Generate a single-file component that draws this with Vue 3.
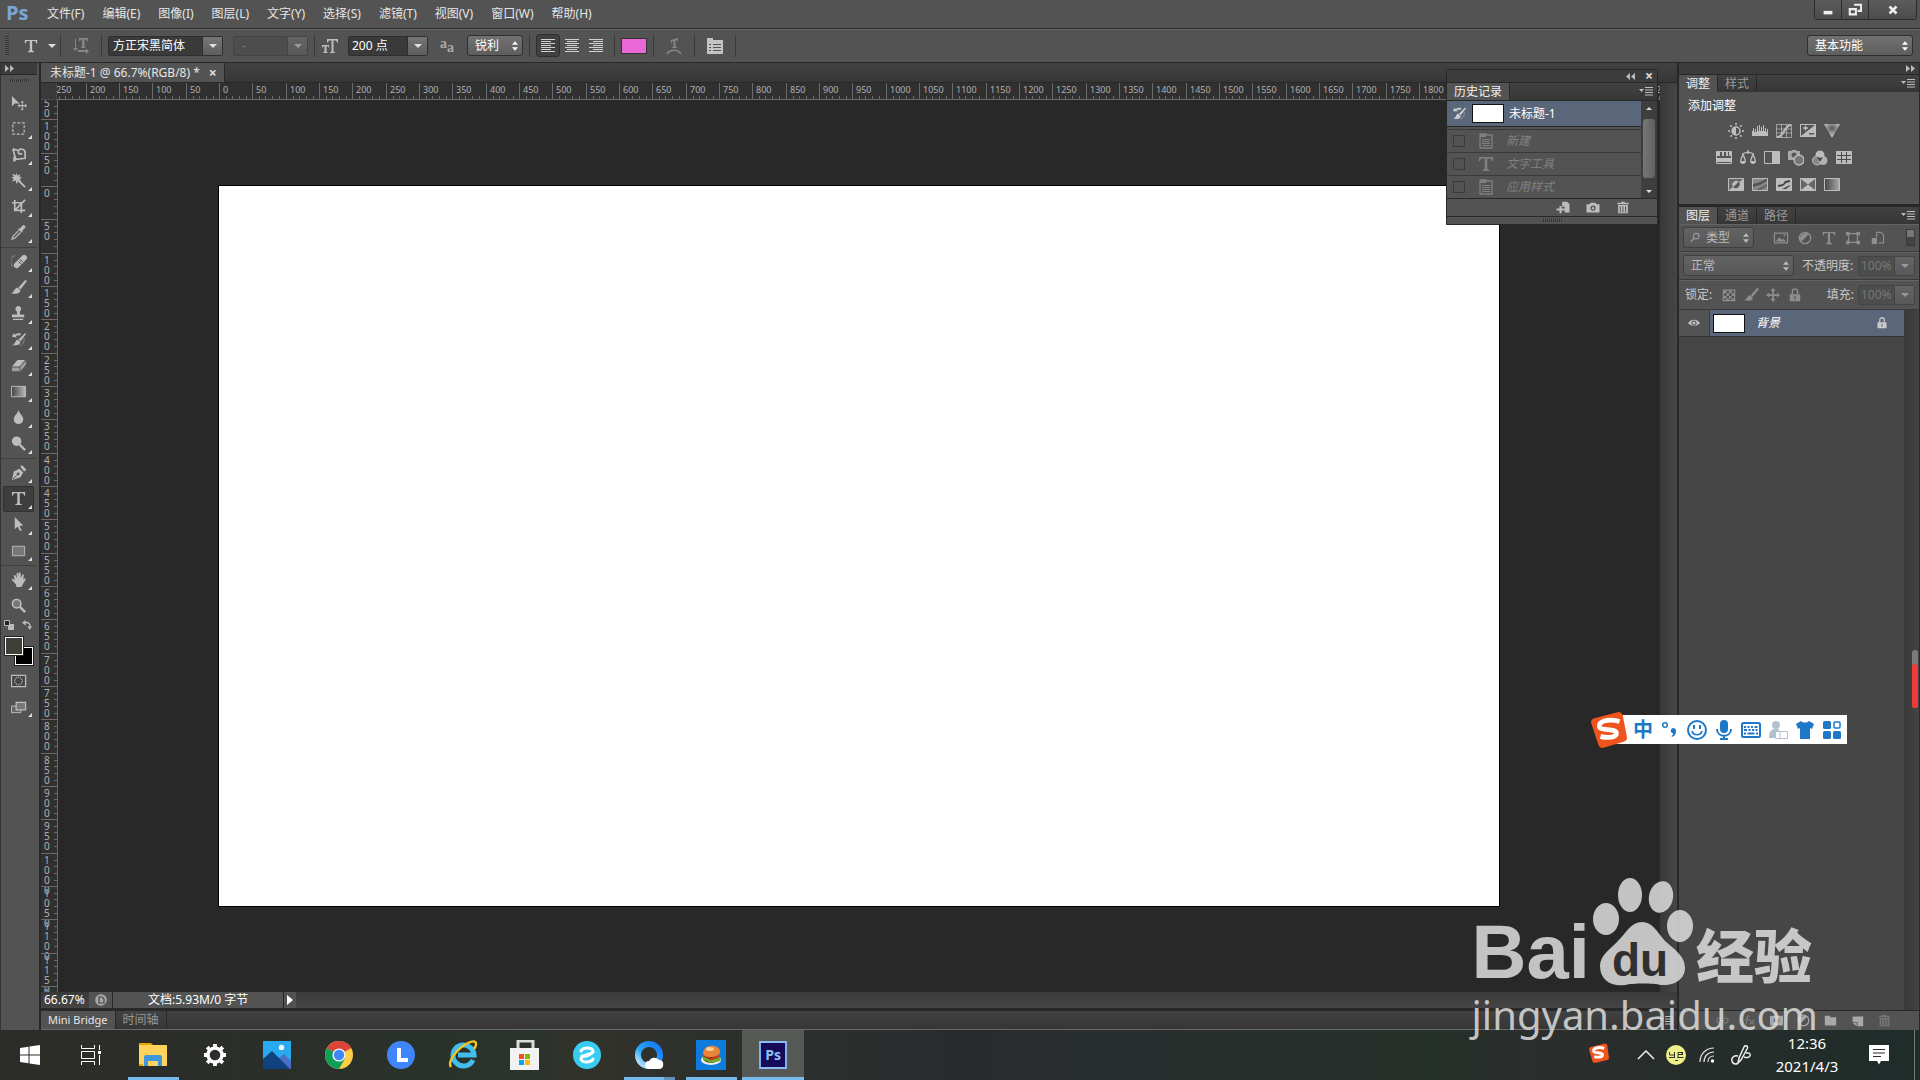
<script setup>
import { ref } from 'vue'

const menus = ['文件(F)', '编辑(E)', '图像(I)', '图层(L)', '文字(Y)', '选择(S)', '滤镜(T)', '视图(V)', '窗口(W)', '帮助(H)']

// 工具箱分组
const toolGroups = [
  ['move', 'marquee', 'lasso', 'wand', 'crop', 'dropper'],
  ['heal', 'brush', 'stamp', 'history', 'eraser', 'gradient', 'blur', 'dodge'],
  ['pen', 'type', 'path', 'rect'],
  ['hand', 'zoom']
]
const activeTool = ref('type')

const hMarks = Array.from({ length: 49 }, (_, i) => Math.abs(i - 5) * 50)
const vMarks = Array.from({ length: 28 }, (_, i) => Math.abs(i - 3) * 50)

const fontName = ref('方正宋黑简体')
const fontStyle = ref('-')
const fontSize = ref('200 点')
const align = ref('left')
const opacity = ref('100%')
const fillValue = ref('100%')

const adjustRows = [
  ['sun', 'levels', 'curves', 'exposure', 'vibrance'],
  ['hue', 'balance', 'bw', 'photo', 'mixer', 'lookup'],
  ['invert', 'poster', 'threshold', 'selective', 'gradmap']
]

const historyItems = [
  { icon: 'doc', name: '新建' },
  { icon: 'type', name: '文字工具' },
  { icon: 'doc', name: '应用样式' }
]

const filterIcons = ['image', 'halfcircle', 'type', 'shape', 'smart']
const lockIcons = ['checker', 'brush', 'cross', 'lock']
const layerActions = ['link', 'fx', 'mask', 'halfcircle', 'folder', 'newlayer', 'trash']

const apps = [
  { icon: 'explorer', name: '文件资源管理器', state: 'open' },
  { icon: 'settings', name: '设置' },
  { icon: 'photos', name: '照片' },
  { icon: 'chrome', name: 'Chrome' },
  { icon: 'lapp', name: 'L' },
  { icon: 'ie', name: 'Internet Explorer' },
  { icon: 'store', name: '应用商店' },
  { icon: 'eapp', name: '2345' },
  { icon: 'qq', name: 'QQ浏览器', state: 'open multi' },
  { icon: 'burger', name: '汉堡', state: 'open' },
  { icon: 'ps', name: 'Photoshop', state: 'open current' }
]

const icons = {
  move: '<path d="M1 1v11l3-3h5z"/><path d="M12 6l2 2h-1.500v2.500H15V9l2 2.500-2 2V12h-2.500v2.500H14l-2 2-2-2h1.500V12H9v1.500l-2-2L9 9v1.500h2.500V8H10z"/>',
  marquee: '<path d="M2 2h12v12H2z" fill="none" stroke="currentColor" stroke-width="1.300" stroke-dasharray="3 1.800"/>',
  lasso: '<path d="M2 2l3 11 10-1V6c0-4-6-5-7-2s1 4 4 3M2 2l6 2M3 15l2-4" fill="none" stroke="currentColor" stroke-width="1.800"/><path d="M2 10l5 3-4 3z"/>',
  wand: '<path d="M6 0l1 3 3-2-1 3 3 1-3 1 2 3-3-1-2 4-1-4-4 1 2-3-3-1 3-1-2-3 4 1z"/><path d="M8 8l7 7" stroke="currentColor" stroke-width="2"/>',
  crop: '<path d="M4 1v11h11M1 4h10v11M5 11l10-10" fill="none" stroke="currentColor" stroke-width="1.800"/>',
  dropper: '<path d="M9 4l1-1 3-3c2 0 3 2 2 3l-3 3 0 2-1 0-4-4z"/><path d="M8 6L2 12l-1 3 3-1 6-6" fill="none" stroke="currentColor" stroke-width="1.300"/>',
  heal: '<path d="M6 12L14 4" stroke="currentColor" stroke-width="6" stroke-linecap="round"/><path d="M7 7l5 5M9 5l4 4" stroke="#666" stroke-width="1"/><path d="M4 2C1 2 0 4 0 7s0 5 2 7" fill="none" stroke="currentColor" stroke-dasharray="1 1"/><path d="M10 7h1v1h-1zM9 9h1v1H9z" fill="#444"/>',
  brush: '<path d="M15 0l2 1-7 9-2-2z"/><path d="M7 8l3 3c0 4-5 4-10 3 4-1 3-5 7-6z"/>',
  stamp: '<path d="M8 0a3 3 0 0 1 2 5c-1 1-.5 2-.5 4H14v3H1V9h5.500c0-2 0-3-1-4A3 3 0 0 1 8 0zM2 13.500h11V15H2z"/>',
  history: '<path d="M15 1l1 1-6 8-2-2zM7 8l3 3c-1 4-5 3-9 3 4-1 3-5 6-6z"/><path d="M1 5l2-4 1 2c3-2 5-2 7-1L9 4C7 3 6 4 5 5l2 1z"/><path d="M14 7c0 4-1 6-4 7" fill="none" stroke="currentColor" stroke-dasharray="1 1"/>',
  eraser: '<path d="M7 2h8l-6 7H1z"/><path d="M1 10h8v4H1zM10 9l6-6v4l-6 7z" opacity=".7"/>',
  gradient: '<defs><linearGradient id="tg"><stop stop-color="#444"/><stop offset="1" stop-color="#bbb"/></linearGradient></defs><path d="M.5 2.500h15v11H.5z" fill="url(#tg)" stroke="currentColor"/>',
  blur: '<path d="M8 0c1 4 5 6 5 10a5 5 0 0 1-10 0C3 6 7 4 8 0z"/>',
  dodge: '<circle cx="6" cy="5.500" r="5"/><path d="M9 9l6 6" stroke="currentColor" stroke-width="2.500"/>',
  pen: '<path fill-rule="evenodd" d="M9 4l4 4-3 5-9 3 2-9zM7.500 8A1.500 1.500 0 1 0 7.600 8zM10 2l1.500-2 5 5L14 7z"/><path d="M2 15l5-5" stroke="#535353"/>',
  type: '<path d="M1 1h14v4h-1c-.4-2-1-2.600-3-2.600H9.300V12c0 1.600.6 1.900 2.200 2v1h-7v-1c1.600-.1 2.200-.4 2.200-2V2.400H5C3 2.400 2.400 3 2 5H1z"/>',
  path: '<path d="M4 0l9 9-4 .5 2.500 4.500-2 1L7 10l-3 3z"/>',
  rect: '<path d="M1.500 3.500h13v10h-13z" fill="#777" stroke="currentColor"/>',
  hand: '<path d="M4 9L3 4c0-1 1.500-1 2 0l1 3V1.500c0-1 1.800-1 2 0V6l.5-5c.2-1 1.800-1 1.800 0v5.500L12 3c.4-1 1.700-.6 1.600.4L13 8l1.500-1c1-.4 1.700.4 1 1.300L12 14l-1 2H6l-1-3-4-4.500C.5 7.500 1.500 7 2.300 7.500z"/>',
  zoom: '<circle cx="6" cy="6" r="4.500" fill="#777" stroke="currentColor" stroke-width="1.600"/><path d="M9.500 9.500l5.500 5.500" stroke="currentColor" stroke-width="2.600"/>',
  orient: '<path d="M6 0h9v3h-1l-1-1.500h-1.500V9h1v1H8V9h1V1.500H8L7 3H6zM3 1v9H5l-2.500 3L0 10h2V1zM5 12h8v-1.500L16 13l-3 3v-2H5z"/>',
  fontsize: '<path d="M5 1h11v3.500h-1c-.3-1.600-.8-2-2.500-2h-1V13c0 1 .5 1 1.500 1v1H8v-1c1 0 1.500 0 1.500-1V2.500h-1c-1.700 0-2.200.4-2.500 2H5z"/><path d="M0 7h7v2.500h-.8c-.2-1-.5-1.200-1.700-1.200V13c0 .8.300 1 1 1v1h-4v-1c.7 0 1-.2 1-1V8.300C1.300 8.300 1 8.500.8 9.500H0z"/>',
  warp: '<path d="M5 2l7-2v3h-1V2L9.500 2.400V9H11v1H6V9h1.500V3L6 3.500V5H5z"/><path d="M1 16c3-5 11-5 14 0" fill="none" stroke="currentColor" stroke-width="1.700"/>',
  panel: '<path fill-rule="evenodd" d="M0 0h6v2h10v14H0zM2 6v1h2V6zm4 0v1h8V6zM2 9v1h2V9zm4 0v1h8V9zm-4 3v1h2v-1zm4 0v1h8v-1z"/>',
  quick: '<path d="M.5 2.500h15v12H.5z" fill="#444" stroke="currentColor" stroke-width="1.400"/><circle cx="8" cy="8.500" r="4" fill="none" stroke="currentColor" stroke-width="1.400" stroke-dasharray="1 1"/>',
  screen: '<path d="M.5 7.500h10v7H.5z" fill="#666" stroke="currentColor"/><path d="M5.500 3.500h10v8h-10z" fill="#777" stroke="currentColor" stroke-width="1.300"/>',
  sun: '<circle cx="8" cy="8" r="4" fill="none" stroke="currentColor" stroke-width="1.500"/><path d="M8 4a4 4 0 0 0 0 8z"/><path d="M8 0v2M8 14v2M0 8h2M14 8h2M2.300 2.300l1.500 1.500M12.200 12.200l1.500 1.500M2.300 13.700l1.500-1.500M12.200 3.800l1.500-1.500" stroke="currentColor" stroke-width="1.600"/>',
  levels: '<path d="M0 13V8h1V5h1v4h1V6h1v3h1V3h1v5h1V2h1v6h1V4h1v4h1V2h1v6h1V5h1v4h1V6h1v7z"/>',
  curves: '<path d="M.5 1.500h15v13H.5zM5.500 1v14M10.500 1v14M0 6h16M0 10h16" fill="none" stroke="currentColor" opacity=".7"/><path d="M1 14c8 0 6-11 14-12" fill="none" stroke="currentColor" stroke-width="2"/>',
  exposure: '<path fill-rule="evenodd" d="M0 1h16v13H0zM1 2v11L15 2zM9 10v1.500h5V10z"/><path d="M3 5h5M5.500 2.500v5" stroke="currentColor" stroke-width="1.300"/>',
  vibrance: '<defs><radialGradient id="vb" cx=".5" cy=".3" r=".5"><stop stop-color="#555"/><stop offset="1" stop-color="#bbb"/></radialGradient></defs><path d="M0 1h16L8 15z" fill="url(#vb)"/>',
  hue: '<path d="M.5 1.500h15v12H.5z" fill="#555" stroke="currentColor"/><path d="M1 2h3v4H1zM6 2h2v4H6zM10 2h2v4h-2zM13 2h2v4h-2zM1 8h14v4H1z"/>',
  balance: '<path d="M8 0v4M2 4l6-2 6 2M3 4L.5 11M3 4l2.500 7M13 4l-2.500 7M13 4l2.500 7" fill="none" stroke="currentColor" stroke-width="1.300"/><path d="M0 11h6c0 4-6 4-6 0zM10 11h6c0 4-6 4-6 0z"/>',
  bw: '<path d="M.5 1.500h15v12H.5z" fill="none" stroke="currentColor"/><path d="M8 2h7v11H8z"/>',
  photo: '<path d="M0 1h3l1-1h4l1 1h3v9H0z" opacity=".8"/><circle cx="6" cy="5" r="2.500" fill="#555"/><circle cx="11" cy="10" r="5" fill="#777" stroke="currentColor" stroke-width="1.300"/>',
  mixer: '<circle cx="8" cy="5" r="4.500"/><circle cx="5" cy="10.500" r="4.500" fill="#888" stroke="currentColor"/><circle cx="11" cy="10.500" r="4.500" opacity=".9"/><path d="M5 7l3 1 3-1-3 5z" fill="#444"/>',
  lookup: '<path d="M0 1h16v13H0z"/><path d="M5.500 2v11M10.500 2v11M1 5.500h14M1 9.500h14" stroke="#4a4a4a"/>',
  invert: '<path d="M.5 1.500h15v12H.5z" fill="#bbb" stroke="currentColor"/><path d="M1 13V2h14z" fill="#666"/><path d="M5.200 10.300a4 4 0 0 1 5.600-5.600z"/><path d="M5.200 10.300a4 4 0 0 0 5.600-5.600z" fill="#555"/>',
  poster: '<path d="M.5 1.500h15v12H.5z" fill="#888" stroke="currentColor"/><path d="M1 7l7-2 6-3h1v2l-7 4-7 2z" fill="#555"/><path d="M3 13l6-3 6-3v2l-6 4z" fill="#666"/>',
  threshold: '<path d="M.5 1.500h15v12H.5z" fill="currentColor" stroke="currentColor"/><path d="M2 8l5-1 2-3 5-1v2l-4 1-3 3-5 1zM6 12l4-2 4-2v1l-4 3z" fill="#444"/>',
  selective: '<path d="M0 1h16v13H0z"/><path d="M1 2l7 5.500L1 13zM15 2L8 7.500 15 13z" fill="#666"/>',
  gradmap: '<defs><linearGradient id="gm"><stop stop-color="#444"/><stop offset="1" stop-color="#aaa"/></linearGradient></defs><path d="M.5 1.500h15v12H.5z" fill="url(#gm)" stroke="currentColor"/>',
  doc: '<path d="M2 1h6l1 1h5v13H2z" fill="none" stroke="currentColor" stroke-width="1.300"/><path d="M2 1h6v3H2zM4 6h8v1H4zM4 8h8v1H4zM4 10h8v1H4zM4 12h8v1H4z"/>',
  newdoc: '<path d="M7 1h6l3 3v10H10V7H7z"/><path d="M5 6v9M0 10.500h10" stroke="currentColor" stroke-width="2.600"/>',
  camera: '<path fill-rule="evenodd" d="M0 4h4l1-2h6l1 2h4v10H0zM8 5.500a3.300 3.300 0 1 0 .1 0z"/><circle cx="8" cy="9" r="1.500"/>',
  trash: '<path d="M6 1h4v1h5v2H1V2h5z"/><path fill-rule="evenodd" d="M2 5h12v10H2zM4 6.500V14h1.200V6.500zm3.300 0V14h1.200V6.500zm3.300 0V14h1.200V6.500z"/>',
  image: '<path d="M.5 2.500h15v11H.5z" fill="none" stroke="currentColor" stroke-width="1.400"/><path d="M2 12l4-5 3 3 2-1 3 3zM11 4h2v2h-2z"/>',
  halfcircle: '<circle cx="8" cy="8" r="6.500" fill="none" stroke="currentColor" stroke-width="1.500"/><path d="M12.500 3.500a6.500 6.500 0 0 0-9 9z"/>',
  shape: '<path d="M3 3h10v10H3z" fill="none" stroke="currentColor" stroke-width="1.300"/><path d="M0 1h4v4H0zM12 1h4v4h-4zM0 11h4v4H0zM12 11h4v4h-4z"/>',
  smart: '<path d="M7.500 7V1.500h5l3 3v9H10" fill="none" stroke="currentColor" stroke-width="1.300"/><path d="M2 8h6v7H2z"/>',
  checker: '<path d="M1.500 2.500h13v12h-13z" fill="none" stroke="currentColor" stroke-width="1.300"/><path d="M2 3h3v3H2zM8 3h3v3H8zM5 6h3v3H5zM11 6h3v3h-3zM2 9h3v3H2zM8 9h3v3H8zM5 12h3v2H5zM11 12h3v2h-3z"/>',
  cross: '<path d="M8 0l3 3.500H9V7h3.500V5L16 8l-3.500 3V9H9v3.500h2L8 16l-3-3.500h2V9H3.500v2L0 8l3.500-3v2H7V3.500H5z"/>',
  lock: '<path d="M5 7V4a3 3 0 0 1 6 0v3" fill="none" stroke="currentColor" stroke-width="1.700"/><path fill-rule="evenodd" d="M2 7h12v8H2zM7.300 9v4h1.400V9z"/>',
  eye: '<path fill-rule="evenodd" d="M0 8c4-6 12-6 16 0-4 5-12 5-16 0zM8 4.500a3.500 3.500 0 1 0 .1 0z"/><circle cx="8" cy="8" r="2"/>',
  search: '<circle cx="9" cy="6" r="4" fill="none" stroke="currentColor" stroke-width="1.600"/><path d="M6 9l-5 5" stroke="currentColor" stroke-width="2"/>',
  link: '<path d="M7 5H4a3 3 0 0 0 0 6h3M9 5h3a3 3 0 0 1 0 6H9M5 8h6" fill="none" stroke="currentColor" stroke-width="1.500"/>',
  fx: '<path d="M8 3C5 1 5 5 4 13M2 7h6M8 7l6 6M14 7l-6 6" fill="none" stroke="currentColor" stroke-width="1.600"/>',
  mask: '<path fill-rule="evenodd" d="M0 2h16v12H0zM8 4.500a3.500 3.500 0 1 0 .1 0z"/>',
  folder: '<path d="M1 2h6l1 2h7v10H1z"/>',
  newlayer: '<path fill-rule="evenodd" d="M2 3h13v12H8v-5H2z"/><path d="M2 11l5 4v-4z"/>'
}

const appIcons = {
  explorer: '<path d="M1 3h12l2 2h-14z" fill="#e8a200"/><path d="M1 5h28v21H1z" fill="#ffd35c"/><path d="M6 26V17q0-2 2-2h14q2 0 2 2v9h-4v-5H10v5z" fill="#3f98dd"/><path d="M1 24h4v2H1z" fill="#e8a200"/>',
  settings: '<circle cx="15" cy="15" r="7" fill="none" stroke="#fff" stroke-width="3.400"/><path d="M15 4v4M15 22v4M4 15h4M22 15h4M7.200 7.200l2.800 2.800M20 20l2.800 2.800M7.200 22.800l2.800-2.800M20 10l2.800-2.800" stroke="#fff" stroke-width="3.800"/>',
  photos: '<path d="M1 1h28v28H1z" fill="#29a9f0"/><path d="M17 18l5-4 7 7v8H17z" fill="#4a6fc4"/><path d="M1 19L10 11l18 18H1z" fill="#10427f"/><circle cx="19.500" cy="7.500" r="2.700" fill="#f4f6ff"/>',
  chrome: '<circle cx="15" cy="15" r="14" fill="#ffce44"/><path d="M15 15L2.900 8A14 14 0 0 1 27.100 8z" fill="#db4437"/><path d="M15 1a14 14 0 0 1 12.100 7H15z" fill="#db4437"/><path d="M2.900 8A14 14 0 0 0 15 29l6-10.500L15 15z" fill="#0f9d58"/><circle cx="15" cy="15" r="6.600" fill="#f1f1f1"/><circle cx="15" cy="15" r="5.200" fill="#4285f4"/>',
  lapp: '<circle cx="15" cy="15" r="14" fill="#3f86fb"/><path d="M11 8h4v10h7v4H11z" fill="#fff"/>',
  ie: '<path d="M25 20A10.500 10.500 0 1 1 26 15H10" fill="none" stroke="#41bdf0" stroke-width="5"/><path d="M3 27C-1 21 10 8 20 3c8-4 10 0 6 6" fill="none" stroke="#f5c51b" stroke-width="2.400"/>',
  store: '<path d="M8 10V1h15v9" fill="none" stroke="#ddd" stroke-width="3"/><path d="M0 8h29v22H0z" fill="#f2f2f2"/><path d="M9 14h5v5H9z" fill="#f25022"/><path d="M15 14h5v5h-5z" fill="#7fba00"/><path d="M9 20h5v5H9z" fill="#00a4ef"/><path d="M15 20h5v5h-5z" fill="#ffb900"/>',
  eapp: '<circle cx="15" cy="15" r="14" fill="#38cdf0"/><path d="M9 11c2-4 11-4 12 0 0 4-12 3-12 8 1 4 10 4 12 0M10 16c4 1 8-1 11-4" fill="none" stroke="#fff" stroke-width="3" stroke-linecap="round"/>',
  qq: '<defs><linearGradient id="qg" x1="1" y1="0" x2="0" y2="1"><stop stop-color="#1677f2"/><stop offset=".6" stop-color="#2aa7f7"/><stop offset="1" stop-color="#d8f0fd"/></linearGradient></defs><circle cx="15" cy="15" r="11" fill="none" stroke="url(#qg)" stroke-width="6"/><path d="M15 29a4 4 0 0 1 0-8 6 6 0 0 1 10-1c3 0 5 2 4 6 0 2-2 3-4 3z" fill="#fff"/>',
  burger: '<path d="M0 0h30v30H0z" fill="#0c7bdc"/><ellipse cx="15" cy="20" rx="10" ry="5" fill="#eee"/><ellipse cx="15" cy="18" rx="8" ry="5" fill="#5a2a12"/><path d="M6 16l9 4 10-3-1 4-9 2-7-3z" fill="#6fae2c"/><path d="M6 14l9 4 9-3v2l-8 3-9-4z" fill="#d93a1e"/><path d="M7 13c0-9 17-10 17-1 0 6-17 7-17 1z" fill="#e8853a"/><ellipse cx="14" cy="9" rx="4" ry="2" fill="#ffd08a"/>',
  ps: '<path d="M2 2h26v26H2z" fill="#150b58" stroke="#8cbcf5" stroke-width="1.800"/><text x="15" y="20" text-anchor="middle" font-family="Open Sans, Noto Sans, sans-serif" font-weight="700" font-size="14" fill="#8fc0f6">Ps</text>'
}

const imeIcons = {
  punct: '<circle cx="5" cy="5" r="2.300" fill="none" stroke="currentColor" stroke-width="1.500"/><path d="M13 8a3 3 0 0 1 3 3c0 4-2 5-4 6l-.5-1c1-.7 1.700-1.500 1.500-2.500A2.800 2.800 0 0 1 13 8z"/>',
  smile: '<circle cx="10" cy="10" r="9" fill="none" stroke="currentColor" stroke-width="2"/><path d="M7 5v4M13 5v4" stroke="currentColor" stroke-width="2"/><path d="M5 11c1 5 9 5 10 0" fill="none" stroke="currentColor" stroke-width="1.600"/>',
  mic: '<rect x="6" y="0" width="8" height="13" rx="4"/><path d="M3 9c0 9 14 9 14 0M10 16v3M6 19h8" fill="none" stroke="currentColor" stroke-width="2"/>',
  keyboard: '<rect x="1" y="3" width="18" height="14" rx="1.500" fill="none" stroke="currentColor" stroke-width="2"/><path d="M3 7h2M6.500 7h2M10 7h2M13.500 7h3M3 10h3M7.500 10h2M11 10h2M14.500 10h2M3 13.500h2M6.500 13.500h7M15 13.500h2" stroke="currentColor" stroke-width="1.800"/>',
  person: '<circle cx="8" cy="5" r="4"/><path d="M1 18c0-8 3-9 7-9h3v9z"/><path d="M7.500 11.500h12v7h-12zM12 12v6" fill="#fff" stroke="currentColor"/>',
  shirt: '<path d="M1 4l5-3c2 2 6 2 8 0l5 3-2 5-2-1v11H5V8L3 9z"/>',
  grid: '<rect x="1" y="1" width="8" height="8" rx="1.500"/><rect x="12" y="2" width="6" height="6" rx="1" fill="none" stroke="currentColor" stroke-width="1.500"/><rect x="1" y="11" width="8" height="8" rx="1.500"/><rect x="11" y="11" width="8" height="8" rx="1.500"/>'
}
</script>

<template>
  <div class="desktop">
    <!-- 菜单栏 -->
    <header class="menubar">
      <span class="ps-logo">Ps</span>
      <nav class="menus">
        <button v-for="m in menus" :key="m" class="menu-item">{{ m }}</button>
      </nav>
      <div class="window-btns">
        <button aria-label="最小化"><svg viewBox="0 0 16 16"><path d="M3 9h10v4H3z" /></svg></button>
        <button aria-label="还原">
          <svg viewBox="0 0 16 16"><path d="M7 2h8v7h-4M2 7h7v6H2z" fill="none" stroke="currentColor" stroke-width="2.4" /></svg>
        </button>
        <button class="close" aria-label="关闭">
          <svg viewBox="0 0 16 16"><path d="M4 4l8 8M12 4l-8 8" stroke="currentColor" stroke-width="3" /></svg>
        </button>
      </div>
    </header>

    <!-- 选项栏 -->
    <div class="options">
      <span class="grip"></span>
      <button class="opt-tool" aria-label="文字工具">
        <svg class="ico" viewBox="0 0 16 16" v-html="icons.type"></svg>
        <i class="caret"></i>
      </button>
      <span class="vsep"></span>
      <button class="opt-icon dim" aria-label="切换方向"><svg class="ico" viewBox="0 0 16 16" v-html="icons.orient"></svg></button>
      <span class="vsep"></span>
      <div class="combo font">
        <input v-model="fontName" aria-label="字体" />
        <button aria-label="选择字体"><i class="caret"></i></button>
      </div>
      <div class="combo style off">
        <input v-model="fontStyle" aria-label="字体样式" disabled />
        <button aria-label="选择样式" disabled><i class="caret"></i></button>
      </div>
      <span class="vsep"></span>
      <svg class="ico size-ico" viewBox="0 0 16 16" v-html="icons.fontsize"></svg>
      <div class="combo size">
        <input v-model="fontSize" aria-label="字号" />
        <button aria-label="选择字号"><i class="caret"></i></button>
      </div>
      <span class="aa"><span>a</span><span>a</span></span>
      <div class="select anti">
        <select aria-label="消除锯齿"><option>锐利</option></select>
        <svg viewBox="0 0 7 11"><path d="M3.500 0L7 4H0zM3.500 11L0 7h7z" /></svg>
      </div>
      <span class="vsep"></span>
      <div class="aligns">
        <button
          v-for="a in ['left', 'center', 'right']"
          :key="a"
          :class="['align-btn', a, { on: align === a }]"
          :aria-label="a"
          @click="align = a"
        >
          <i v-for="n in 7" :key="n"></i>
        </button>
      </div>
      <span class="vsep"></span>
      <button class="color-swatch" aria-label="文本颜色"></button>
      <span class="vsep"></span>
      <button class="opt-icon dim" aria-label="变形文字"><svg class="ico" viewBox="0 0 16 16" v-html="icons.warp"></svg></button>
      <span class="vsep"></span>
      <button class="opt-icon" aria-label="字符面板"><svg class="ico" viewBox="0 0 16 16" v-html="icons.panel"></svg></button>
      <span class="vsep"></span>
      <div class="select workspace-select">
        <select aria-label="工作区"><option>基本功能</option></select>
        <svg viewBox="0 0 7 11"><path d="M3.500 0L7 4H0zM3.500 11L0 7h7z" /></svg>
      </div>
    </div>

    <main class="workspace">
      <!-- 工具箱 -->
      <aside class="toolbox">
        <div class="tool-strip"><svg class="dbl" viewBox="0 0 10 7"><path d="M0 0l4 3.500L0 7zM5 0l4 3.500L5 7z" /></svg></div>
        <span class="tool-grip"></span>
        <div v-for="(group, gi) in toolGroups" :key="gi" :class="['tool-group', { last: gi === toolGroups.length - 1 }]">
          <button
            v-for="t in group"
            :key="t"
            :class="['tool', { active: activeTool === t }]"
            :aria-label="t"
            @click="activeTool = t"
          >
            <svg class="ico" viewBox="0 0 17 17" v-html="icons[t]"></svg>
            <i v-if="t !== 'move' && t !== 'zoom'" class="corner"></i>
          </button>
        </div>
        <div class="color-mini">
          <svg viewBox="0 0 10 10"><path d="M4 4h6v6H4z" fill="#bbb" /><path d="M.5.5h5v5h-5z" fill="#222" stroke="#bbb" /></svg>
          <svg viewBox="0 0 11 11"><path d="M3 3c4-1 6 1 6 5" fill="none" stroke="#bbb" stroke-width="1.500" /><path d="M0 3l4-3v6zM6 7h5l-2.500 4z" fill="#bbb" /></svg>
        </div>
        <div class="colors">
          <span class="bg-color"></span>
          <span class="fg-color"></span>
        </div>
        <button class="tool" aria-label="快速蒙版"><svg class="ico" viewBox="0 0 17 17" v-html="icons.quick"></svg></button>
        <button class="tool" aria-label="屏幕模式">
          <svg class="ico" viewBox="0 0 17 17" v-html="icons.screen"></svg>
          <i class="corner"></i>
        </button>
      </aside>

      <!-- 文档窗口 -->
      <section class="document">
        <div class="doc-tabs">
          <div class="doc-tab">
            <span>未标题-1 @ 66.7%(RGB/8) *</span>
            <button aria-label="关闭文档">×</button>
          </div>
        </div>
        <div class="editor">
          <div class="editor-main">
            <div class="ruler-row">
              <span class="ruler-corner"></span>
              <div class="ruler-h">
                <div class="marks">
                  <div v-for="(n, i) in hMarks" :key="i" class="mark">
                    <svg width="34" height="16"><path d="M0 0h1v16H0zM7 13h1v3H7zM13 13h1v3h-1zM20 13h1v3h-1zM27 13h1v3h-1z" /></svg>
                    <span>{{ n }}</span>
                  </div>
                </div>
              </div>
            </div>
            <div class="canvas-row">
              <div class="ruler-v">
                <div class="marks">
                  <div v-for="(n, i) in vMarks" :key="i" class="mark">
                    <svg width="16" height="34"><path d="M0 0h16v1H0zM13 7h3v1h-3zM13 13h3v1h-3zM13 20h3v1h-3zM13 27h3v1h-3z" /></svg>
                    <span>{{ n }}</span>
                  </div>
                </div>
              </div>
              <div class="viewport"><div class="artboard"></div></div>
            </div>
          </div>
          <div class="scroll-col"></div>
        </div>
        <div class="status">
          <span class="zoom-value">66.67%</span>
          <span class="status-ico">
            <svg viewBox="0 0 12 12"><circle cx="6" cy="6" r="5.800" fill="#aaa" /><path d="M4 3h3l2 2v4H4z" fill="none" stroke="#444" stroke-width="1.200" /></svg>
          </span>
          <span class="doc-size">文档:5.93M/0 字节</span>
          <button class="status-more" aria-label="更多"></button>
        </div>
        <div class="bottom-tabs">
          <button class="on">Mini Bridge</button>
          <button>时间轴</button>
          <svg class="panel-menu" viewBox="0 0 14 9"><path d="M0 2h5L2.500 5zM6 0h8v1H6zM6 2.500h8v1H6zM6 5h8v1H6zM6 7.500h8v1H6z" /></svg>
        </div>
      </section>

      <!-- 右侧面板 -->
      <aside class="dock">
        <div class="dock-strip"><svg class="dbl" viewBox="0 0 10 7"><path d="M0 0l4 3.500L0 7zM5 0l4 3.500L5 7z" /></svg></div>
        <div class="panel-tabs">
          <button class="on">调整</button>
          <button>样式</button>
          <svg class="panel-menu" viewBox="0 0 14 9"><path d="M0 2h5L2.500 5zM6 0h8v1H6zM6 2.500h8v1H6zM6 5h8v1H6zM6 7.500h8v1H6z" /></svg>
        </div>
        <div class="adjust">
          <h3>添加调整</h3>
          <div v-for="(row, ri) in adjustRows" :key="ri" class="adjust-row">
            <button v-for="a in row" :key="a" :aria-label="a"><svg class="ico" viewBox="0 0 16 16" v-html="icons[a]"></svg></button>
          </div>
        </div>
        <div class="panel-tabs layers-tabs">
          <button class="on">图层</button>
          <button>通道</button>
          <button>路径</button>
          <svg class="panel-menu" viewBox="0 0 14 9"><path d="M0 2h5L2.500 5zM6 0h8v1H6zM6 2.500h8v1H6zM6 5h8v1H6zM6 7.500h8v1H6z" /></svg>
        </div>
        <div class="layer-row filter-row">
          <div class="select dimmed kind">
            <svg class="find" viewBox="0 0 16 16" v-html="icons.search"></svg>
            <select aria-label="图层类型"><option>类型</option></select>
            <svg viewBox="0 0 7 11"><path d="M3.500 0L7 4H0zM3.500 11L0 7h7z" /></svg>
          </div>
          <div class="filter-icons">
            <button v-for="f in filterIcons" :key="f" :aria-label="f"><svg class="ico" viewBox="0 0 16 16" v-html="icons[f]"></svg></button>
          </div>
          <span class="toggle"></span>
        </div>
        <div class="layer-row mode-row">
          <div class="select dimmed mode">
            <select aria-label="混合模式"><option>正常</option></select>
            <svg viewBox="0 0 7 11"><path d="M3.500 0L7 4H0zM3.500 11L0 7h7z" /></svg>
          </div>
          <label for="opacity">不透明度:</label>
          <div class="combo pct off">
            <input id="opacity" v-model="opacity" disabled />
            <button aria-label="调整不透明度" disabled><i class="caret"></i></button>
          </div>
        </div>
        <div class="layer-row lock-row">
          <span>锁定:</span>
          <div class="lock-icons">
            <button v-for="l in lockIcons" :key="l" :aria-label="l"><svg class="ico" viewBox="0 0 16 16" v-html="icons[l]"></svg></button>
          </div>
          <label for="fill">填充:</label>
          <div class="combo pct off">
            <input id="fill" v-model="fillValue" disabled />
            <button aria-label="调整填充" disabled><i class="caret"></i></button>
          </div>
        </div>
        <div class="layer-area">
          <div class="layers">
            <div class="layer">
              <button class="eye" aria-label="可见性"><svg viewBox="0 0 16 16" v-html="icons.eye"></svg></button>
              <div class="layer-body">
                <span class="thumb"></span>
                <em>背景</em>
                <svg class="layer-lock" viewBox="0 0 16 16" v-html="icons.lock"></svg>
              </div>
            </div>
          </div>
          <div class="layer-scroll"></div>
        </div>
        <div class="layer-foot">
          <button v-for="l in layerActions" :key="l" :class="l" :aria-label="l"><svg viewBox="0 0 16 16" v-html="icons[l]"></svg></button>
        </div>
      </aside>
    </main>

    <!-- 任务栏 -->
    <footer class="taskbar">
      <button class="task start" aria-label="开始">
        <svg viewBox="0 0 20 20"><path d="M0 3l8.500-1.300v7.800H0zM9.500 1.500L20 0v9.500H9.500zM0 10.500h8.500v7.800L0 17zM9.500 10.500H20V20L9.500 18.500z" fill="#fff" /></svg>
      </button>
      <button class="task view" aria-label="任务视图">
        <svg viewBox="0 0 20 20"><path d="M.5 0v3.500h13V0M.5 20v-3.500h13V20M.5 6.500h13v7H.5zM18.500 0v5M18.500 10v10" fill="none" stroke="#fff" /><path d="M17 6h3v3h-3z" fill="#fff" /></svg>
      </button>
      <button v-for="app in apps" :key="app.name" :class="['task', app.state]" :aria-label="app.name">
        <svg viewBox="0 0 30 30" v-html="appIcons[app.icon]"></svg>
      </button>
      <div class="tray">
        <svg class="tray-s" viewBox="0 0 34 34">
          <path d="M3 7L27 1q3 0 4 3l3 21q0 3-3 4L10 34q-3 0-4-3L0 11q0-3 3-4z" fill="#f0541e" />
          <path d="M26 9C15 6 7 9 8 14c1 4 15 1 15 6 0 4-8 5-14 3" fill="none" stroke="#fff" stroke-width="5" />
        </svg>
        <svg class="tray-up" viewBox="0 0 16 10"><path d="M0 9l8-8 8 8" fill="none" stroke="#eee" stroke-width="1.500" /></svg>
        <svg class="tray-yellow" viewBox="0 0 20 20">
          <circle cx="10" cy="10" r="10" fill="#eef08a" />
          <path d="M3.500 7v3h5V7M3 12.500h6M8.500 10v3M12 7.500h4v2h-4zM11.500 12.500h6M12 10v3M16.500 7v3M9 15.500h3" fill="none" stroke="#333" stroke-width="1" />
        </svg>
        <svg class="tray-wifi" viewBox="0 0 16 16"><circle cx="13.500" cy="14" r="1.700" fill="#fff" /><path d="M1 15C1 7 7 1 15 1M5 15C5 9 9 5 15 5M9 15c0-4 2-6 6-6" fill="none" stroke="#ddd" stroke-width="1.200" /></svg>
        <svg class="tray-pen" viewBox="0 0 20 20"><path d="M7 18l1-5 5-11q1-2 3-1 1 1 0 3l-6 11zM7 11C3 10 0 13 1 16c1 4 6 4 7 0M15 8h3c3 2 0 6-5 4" fill="none" stroke="#eee" stroke-width="1.500" /></svg>
        <div class="clock">
          <span>12:36</span>
          <span>2021/4/3</span>
        </div>
        <svg class="tray-note" viewBox="0 0 20 20"><path d="M0 0h20v16h-8l-2 3.500L8 16H0z" fill="#fff" /><path d="M4 4.500h12M4 8h12M4 11.500h8" stroke="#26302c" stroke-width="1.200" /></svg>
        <span class="show-desktop"></span>
      </div>
    </footer>

    <!-- 历史记录浮动面板 -->
    <section class="history">
      <div class="history-bar">
        <svg class="dbl" viewBox="0 0 10 7"><path d="M4 0L0 3.500 4 7zM9 0L5 3.500 9 7z" /></svg>
        <button aria-label="关闭面板">×</button>
      </div>
      <div class="panel-tabs">
        <button class="on">历史记录</button>
        <svg class="panel-menu" viewBox="0 0 14 9"><path d="M0 2h5L2.500 5zM6 0h8v1H6zM6 2.500h8v1H6zM6 5h8v1H6zM6 7.500h8v1H6z" /></svg>
      </div>
      <div class="history-body">
        <ul>
          <li class="snapshot">
            <svg class="ico" viewBox="0 0 17 17" v-html="icons.history"></svg>
            <span class="thumb"></span>
            <span>未标题-1</span>
          </li>
          <li v-for="h in historyItems" :key="h.name" class="step">
            <i class="box"></i>
            <svg class="ico" viewBox="0 0 16 16" v-html="icons[h.icon]"></svg>
            <em>{{ h.name }}</em>
          </li>
        </ul>
        <div class="history-scroll">
          <i class="up"></i>
          <span></span>
          <i class="down"></i>
        </div>
      </div>
      <div class="history-foot">
        <button aria-label="新建文档"><svg viewBox="0 0 16 16" v-html="icons.newdoc"></svg></button>
        <button aria-label="新建快照"><svg viewBox="0 0 16 16" v-html="icons.camera"></svg></button>
        <button aria-label="删除"><svg viewBox="0 0 16 16" v-html="icons.trash"></svg></button>
      </div>
      <div class="history-edge"><span></span></div>
    </section>

    <!-- 输入法工具条 -->
    <div class="ime">
      <svg class="ime-logo" viewBox="0 0 34 34">
        <path d="M3 6L26 0q3 0 4 3l4 21q0 3-3 4L11 34q-3 0-4-3L0 10q0-3 3-4z" fill="#f0541e" />
        <path d="M27 9C15 6 7 9 8 14c1 4 16 1 16 6 0 4-8 5-15 3" fill="none" stroke="#fff" stroke-width="4.500" />
      </svg>
      <button class="zh">中</button>
      <button v-for="(svg, name) in imeIcons" :key="name" :class="name" :aria-label="name"><svg viewBox="0 0 20 20" v-html="svg"></svg></button>
    </div>

    <div class="side-meter"><span></span></div>

    <!-- 水印 -->
    <div class="watermark">
      <div class="wm-top">
        <span class="wm-bai">Bai</span>
        <svg viewBox="0 0 100 108">
          <ellipse cx="13" cy="41" rx="13" ry="16" />
          <ellipse cx="37" cy="17" rx="12" ry="17" />
          <ellipse cx="68" cy="19" rx="12" ry="16" transform="rotate(12 68 19)" />
          <ellipse cx="87" cy="48" rx="13" ry="16" />
          <path d="M49 44C60 44 64 54 72 63c10 9 20 15 20 27 0 12-12 18-24 17-8-2-28-2-36 0C18 109 7 102 7 88c0-10 9-16 17-24C34 54 38 44 49 44z" />
          <text x="47" y="98" text-anchor="middle">du</text>
        </svg>
        <span class="wm-exp">经验</span>
      </div>
      <div class="wm-url">jingyan.baidu.com</div>
    </div>
  </div>
</template>

<style>
html,
body {
  margin: 0;
  background: #282828;
}
</style>

<style scoped>
.desktop {
  position: relative;
  display: flex;
  flex-direction: column;
  height: 100vh;
  overflow: hidden;
  background: #535353;
  color: #e6e6e6;
  font-family: "Noto Sans", "Noto Sans CJK SC", sans-serif;
  font-size: 12px;
  line-height: 16px;
}

.desktop * {
  box-sizing: border-box;
}

button,
input,
select {
  margin: 0;
  padding: 0;
  border: none;
  background: none;
  color: inherit;
  font: inherit;
}

button {
  display: flex;
  align-items: center;
  justify-content: center;
}

svg {
  display: block;
  flex: none;
  fill: currentColor;
}

.ico {
  width: 16px;
  height: 16px;
}

.dbl {
  width: 10px;
  height: 7px;
  color: #bbb;
}

.caret {
  border: 4px solid transparent;
  border-top: 4px solid #e0e0e0;
  border-bottom: none;
}

/* 菜单栏 */
.menubar {
  display: flex;
  height: 28px;
  flex: none;
}

.ps-logo {
  width: 38px;
  padding-left: 6px;
  color: #7ba7d8;
  font-family: "Open Sans", "Noto Sans", sans-serif;
  font-size: 20px;
  font-weight: 700;
  line-height: 26px;
}

.menus {
  display: flex;
  flex: 1;
  height: 27px;
}

.menu-item {
  padding: 0 9px;
}

.window-btns {
  display: flex;
  height: 20px;
  margin-right: 3px;
  border: 1px solid #2c2c2c;
  border-top: none;
  border-radius: 0 0 3px 3px;
}

.window-btns button {
  width: 27px;
  border-right: 1px solid #2c2c2c;
  background: linear-gradient(#5c5c5c, #4c4c4c);
  color: #eee;
}

.window-btns .close {
  width: 47px;
  border-right: none;
}

.window-btns svg {
  width: 14px;
  height: 14px;
}

/* 选项栏 */
.options {
  display: flex;
  align-items: center;
  flex: none;
  height: 35px;
  padding: 0 7px 0 5px;
  border-top: 1px solid #282828;
  border-bottom: 1px solid #282828;
  box-shadow: inset 0 1px #686868;
}

.grip {
  width: 4px;
  height: 20px;
  background: repeating-linear-gradient(#333 0 1px, #5a5a5a 1px 2px);
}

.vsep {
  flex: none;
  width: 1px;
  height: 22px;
  background: #3a3a3a;
}

.opt-tool {
  gap: 9px;
  width: 51px;
  padding-left: 9px;
  color: #c4c4c4;
}

.opt-tool .ico {
  height: 14px;
}

.opt-icon {
  width: 40px;
  color: #c4c4c4;
}

.opt-icon.dim {
  color: #858585;
}

.combo {
  display: flex;
  height: 20px;
  border: 1px solid #2f2f2f;
  border-radius: 2px;
  background: #3a3a3a;
  color: #fff;
}

.combo input {
  flex: 1;
  min-width: 0;
  padding-left: 4px;
}

.combo button {
  width: 20px;
  border-left: 1px solid #2f2f2f;
  background: linear-gradient(#757575, #5d5d5d);
}

.combo.off {
  border-color: #444;
  background: #4d4d4d;
  color: #777;
}

.combo.off button {
  border-color: #444;
  background: linear-gradient(#646464, #585858);
}

.combo.off .caret {
  border-top-color: #999;
}

.combo.font {
  width: 115px;
  margin: 0 10px 0 6px;
}

.combo.style {
  width: 75px;
  margin-right: 6px;
}

.combo.style input {
  padding-left: 8px;
}

.size-ico {
  margin: 0 10px 0 7px;
  color: #bdbdbd;
}

.combo.size {
  width: 80px;
}

.combo.size input {
  padding-left: 3px;
}

.aa {
  display: flex;
  width: 14px;
  margin: 0 13px 0 12px;
  color: #aaa;
  font-family: "Liberation Serif", serif;
  font-size: 14px;
  font-weight: 700;
}

.aa span:first-child {
  padding-bottom: 4px;
}

.aa span:last-child {
  padding-top: 4px;
}

.select {
  position: relative;
  display: flex;
  height: 21px;
  border: 1px solid #2f2f2f;
  border-radius: 3px;
  background: linear-gradient(#717171, #5e5e5e);
  color: #fff;
}

.select select {
  flex: 1;
  min-width: 0;
  padding-left: 7px;
  appearance: none;
}

.select svg:last-child {
  position: absolute;
  top: 5px;
  right: 4px;
  width: 6px;
  height: 10px;
  pointer-events: none;
}

.select.anti {
  width: 56px;
  margin-right: 6px;
}

.aligns {
  display: flex;
  margin: 0 6px;
}

.align-btn {
  flex-direction: column;
  gap: 1px;
  width: 24px;
  height: 23px;
  padding: 0 5px;
  border-radius: 3px;
}

.align-btn.on {
  border: 1px solid #2f2f2f;
  background: #404040;
  padding: 0 4px;
}

.align-btn.left {
  align-items: flex-start;
}

.align-btn.right {
  align-items: flex-end;
}

.align-btn i {
  width: 10px;
  height: 1px;
  background: #d0d0d0;
}

.align-btn i:nth-child(odd) {
  width: 14px;
}

.color-swatch {
  width: 26px;
  height: 16px;
  margin: 0 6px;
  border: 1px solid #333;
  background: #eb68d8;
}

.workspace-select {
  width: 106px;
  margin-left: auto;
}

/* 工作区 */
.workspace {
  display: flex;
  flex: 1;
  min-height: 0;
}

.toolbox {
  display: flex;
  flex-direction: column;
  width: 41px;
  flex: none;
  padding-right: 2px;
  border-left: 1px solid #333;
  border-right: 2px solid #282828;
  color: #bdbdbd;
}

.tool-strip {
  display: flex;
  align-items: center;
  height: 12px;
  padding-left: 4px;
  border-bottom: 1px solid #282828;
  background: #3c3c3c;
}

.tool-grip {
  width: 19px;
  height: 3px;
  margin: 4px 0 8px 9px;
  background: repeating-linear-gradient(90deg, #333 0 1px, #5a5a5a 1px 2px);
}

.tool-group {
  padding-bottom: 1px;
  margin-bottom: 1px;
  border-bottom: 1px solid #404040;
}

.tool-group.last {
  padding-bottom: 0;
  margin-bottom: 0;
  border-bottom: none;
}

.tool {
  position: relative;
  width: 31px;
  height: 26px;
  margin-left: 2px;
}

.tool.active {
  border: 1px solid #303030;
  border-radius: 2px;
  background: #3e3e3e;
}

.corner {
  position: absolute;
  right: 2px;
  bottom: 3px;
  border: 2px solid #ddd;
  border-top-color: transparent;
  border-left-color: transparent;
}

.tool.active .corner {
  right: 1px;
  bottom: 2px;
}

.color-mini {
  display: flex;
  gap: 8px;
  height: 14px;
  margin-top: 1px;
  padding-left: 3px;
}

.color-mini svg {
  width: 10px;
  height: 10px;
}

.colors {
  position: relative;
  height: 33px;
  margin-top: 1px;
}

.fg-color,
.bg-color {
  position: absolute;
  width: 18px;
  height: 18px;
  border: 1px solid #fff;
  outline: 1px solid #222;
}

.fg-color {
  top: 2px;
  left: 4px;
  background: #3e4038;
}

.bg-color {
  top: 12px;
  left: 14px;
  background: #000;
}

/* 文档窗口 */
.document {
  display: flex;
  flex-direction: column;
  flex: 1;
  min-width: 0;
  background: #282828;
}

.doc-tabs {
  display: flex;
  flex: none;
  height: 20px;
  border-bottom: 1px solid #282828;
  background: linear-gradient(#424242, #363636);
}

.doc-tab {
  display: flex;
  gap: 9px;
  padding: 1px 7px 0 9px;
  border-right: 1px solid #282828;
  background: #535353;
  line-height: 18px;
}

.doc-tab button,
.history-bar button {
  color: #ddd;
  font-size: 14px;
  font-weight: 700;
  line-height: 14px;
}

.editor {
  display: flex;
  flex: 1;
  min-height: 0;
}

.editor-main {
  display: flex;
  flex-direction: column;
  flex: 1;
  min-width: 0;
}

.ruler-row {
  display: flex;
  flex: none;
  height: 17px;
}

.ruler-corner {
  width: 16px;
  border-right: 1px dotted #555;
  border-bottom: 1px dotted #555;
  background: #3a3a3a;
}

.ruler-h {
  flex: 1;
  min-width: 0;
  overflow: hidden;
  border-bottom: 1px solid #6a6a6a;
  background: #303030;
}

.marks {
  display: flex;
}

.ruler-h .marks {
  margin-left: -5px;
}

.mark {
  position: relative;
  flex: none;
  color: #b0b0b0;
  font-size: 9px;
  line-height: 10px;
}

.mark svg {
  position: absolute;
  fill: #6a6a6a;
}

.ruler-h .mark {
  width: 33px;
  height: 16px;
  padding: 2px 0 0 4px;
}

.ruler-h .mark:nth-child(3n + 1) {
  width: 34px;
}

.ruler-h .mark svg {
  top: 0;
  left: 0;
}

.canvas-row {
  display: flex;
  flex: 1;
  min-height: 0;
}

.ruler-v {
  width: 17px;
  overflow: hidden;
  border-right: 1px solid #6a6a6a;
  background: #303030;
}

.ruler-v .marks {
  flex-direction: column;
  margin-top: -14px;
}

.ruler-v .mark {
  width: 16px;
  height: 33px;
  padding: 2px 6px 0 3px;
  font-size: 10px;
}

.ruler-v .mark:nth-child(3n + 2) {
  height: 34px;
}

.ruler-v .mark svg {
  top: 0;
  left: 0;
}

.ruler-v .mark span {
  display: block;
  width: 6px;
  word-break: break-all;
}

.viewport {
  flex: 1;
  min-width: 0;
  overflow: hidden;
}

.artboard {
  width: 1282px;
  height: 722px;
  margin: 85px 0 0 160px;
  border: 1px solid #000;
  background: #fff;
}

.scroll-col {
  width: 17px;
  background: linear-gradient(90deg, #383838, #464646);
}

.status {
  display: flex;
  flex: none;
  height: 16px;
  margin-bottom: 3px;
  background: linear-gradient(#3a3a3a, #454545);
  color: #fff;
}

.zoom-value {
  width: 48px;
  padding-left: 3px;
}

.status-ico {
  display: flex;
  align-items: center;
  justify-content: center;
  width: 24px;
  border-right: 1px solid #282828;
  background: #535353;
}

.status-ico svg {
  width: 12px;
  height: 12px;
}

.doc-size {
  width: 171px;
  padding-left: 35px;
  border-right: 1px solid #282828;
  background: #535353;
}

.status-more {
  width: 12px;
  background: #535353;
}

.status-more::before {
  content: "";
  border: 5px solid transparent;
  border-right: none;
  border-left: 6px solid #fff;
}

.bottom-tabs {
  display: flex;
  flex: none;
  height: 19px;
  border-bottom: 1px solid #6a6a6a;
  background: linear-gradient(#424242, #363636);
}

.bottom-tabs button {
  padding: 0 7px;
  border-right: 1px solid #282828;
  color: #999;
}

.bottom-tabs .on {
  background: #535353;
  color: #e6e6e6;
  font-size: 11px;
}

.panel-menu {
  align-self: center;
  width: 14px;
  height: 9px;
  margin: 0 4px 0 auto;
  color: #bdbdbd;
}

/* 右侧面板 */
.dock {
  display: flex;
  flex-direction: column;
  flex: none;
  width: 243px;
  border-left: 2px solid #282828;
  border-right: 1px solid #282828;
}

.dock-strip {
  display: flex;
  align-items: center;
  justify-content: flex-end;
  height: 12px;
  padding-right: 3px;
  border-bottom: 1px solid #282828;
  background: #3c3c3c;
}

.panel-tabs {
  display: flex;
  flex: none;
  height: 17px;
  background: linear-gradient(#424242, #363636);
}

.panel-tabs button {
  padding: 0 7px;
  border-right: 1px solid #282828;
  color: #999;
}

.panel-tabs .on {
  background: #535353;
  color: #f0f0f0;
}

.adjust {
  flex: none;
  height: 112px;
  padding: 6px 40px 0 9px;
  color: #bdbdbd;
}

.adjust h3 {
  margin: 0 0 9px;
  color: #fff;
  font-size: 12px;
  font-weight: 400;
}

.adjust-row {
  display: flex;
  justify-content: center;
  gap: 8px;
  margin-right: -10px;
  margin-left: -10px;
  margin-bottom: 11px;
}

.layers-tabs {
  height: 20px;
  border-top: 3px solid #282828;
}

.layer-row {
  display: flex;
  align-items: center;
  flex: none;
  height: 28px;
  padding: 0 4px;
  border-bottom: 1px solid #3a3a3a;
  box-shadow: inset 0 1px #636363;
  color: #c8c8c8;
}

.select.dimmed {
  border-color: #3f3f3f;
  background: linear-gradient(#636363, #585858);
  color: #bbb;
}

.select.kind {
  width: 71px;
}

.kind .find {
  width: 11px;
  height: 11px;
  margin: 4px 0 0 6px;
  color: #999;
}

.kind select {
  padding-left: 5px;
}

.filter-icons {
  display: flex;
  gap: 8px;
  margin-left: 19px;
  color: #8e8e8e;
}

.filter-icons .ico {
  height: 14px;
}

.toggle {
  width: 9px;
  height: 17px;
  margin-left: auto;
  border: 1px solid #3a3a3a;
  background: linear-gradient(#777 0 7px, #444 7px);
}

.select.mode {
  width: 111px;
}

.layer-row label {
  margin: 0 4px 0 8px;
}

.combo.pct {
  width: 57px;
  margin-left: auto;
}

.combo.pct input {
  padding-left: 2px;
}

.layer-row.lock-row {
  height: 30px;
  padding-left: 6px;
}

.lock-icons {
  display: flex;
  gap: 6px;
  margin-left: 9px;
  color: #8e8e8e;
}

.lock-icons .ico {
  height: 14px;
}

.lock-row label {
  margin-left: auto;
}

.lock-row .combo.pct {
  margin-left: 0;
}

.layer-area {
  display: flex;
  flex: 1;
  min-height: 0;
}

.layers {
  flex: 1;
  background: #464646;
}

.layer {
  display: flex;
  height: 27px;
  border-bottom: 1px solid #333;
}

.eye {
  width: 31px;
  border-right: 1px solid #3a3a3a;
  background: #535353;
  color: #c4c4c4;
}

.eye svg {
  width: 12px;
  height: 12px;
}

.layer-body {
  display: flex;
  align-items: center;
  flex: 1;
  padding: 0 16px 0 3px;
  background: #5a6679;
  color: #fff;
}

.thumb {
  width: 32px;
  height: 19px;
  border: 1px solid #111;
  background: #fff;
}

.layer-body em {
  flex: 1;
  margin-left: 11px;
}

.layer-lock {
  width: 12px;
  height: 14px;
  color: #ccc;
}

.layer-scroll {
  width: 15px;
  background: linear-gradient(90deg, #383838, #444);
}

.layer-foot {
  display: flex;
  justify-content: flex-end;
  gap: 14px;
  flex: none;
  height: 20px;
  padding-right: 28px;
  border-top: 1px solid #282828;
  color: #a8a8a8;
}

.layer-foot svg {
  width: 13px;
  height: 13px;
}

.layer-foot .link,
.layer-foot .fx,
.layer-foot .trash {
  color: #777;
}

/* 历史记录 */
.history {
  position: absolute;
  top: 69px;
  right: 262px;
  width: 212px;
  border: 1px solid #282828;
  border-radius: 4px 4px 0 0;
  background: #535353;
}

.history-bar {
  display: flex;
  align-items: center;
  justify-content: flex-end;
  gap: 9px;
  height: 13px;
  padding-right: 4px;
  border-bottom: 1px solid #282828;
  border-radius: 4px 4px 0 0;
  background: #3c3c3c;
}

.history-body {
  display: flex;
  border-top: 1px solid #282828;
}

.history ul {
  flex: 1;
  margin: 0;
  padding: 0;
  list-style: none;
}

.snapshot,
.step {
  display: flex;
  align-items: center;
}

.snapshot {
  gap: 5px;
  height: 26px;
  padding-left: 5px;
  margin-bottom: 2px;
  border-bottom: 1px solid #282828;
  background: #5a6679;
  color: #fff;
}

.snapshot .ico {
  width: 15px;
  color: #ccc;
}

.step {
  height: 23px;
  padding-left: 6px;
  border-top: 1px solid #3a3a3a;
  color: #808080;
}

.step .box {
  width: 12px;
  height: 12px;
  margin-right: 13px;
  border: 1px solid #3a3a3a;
}

.step em {
  margin-left: 12px;
}

.history-scroll {
  display: flex;
  flex-direction: column;
  align-items: center;
  justify-content: space-between;
  width: 16px;
  padding: 6px 0 5px;
  background: #3e3e3e;
}

.history-scroll span {
  width: 12px;
  height: 59px;
  margin-bottom: 4px;
  border-radius: 3px;
  background: linear-gradient(90deg, #777, #606060);
}

.history-scroll .up,
.history-scroll .down {
  border: 3px solid transparent;
}

.history-scroll .up {
  border-top: none;
  border-bottom-color: #ddd;
}

.history-scroll .down {
  border-bottom: none;
  border-top-color: #ddd;
}

.history-foot {
  display: flex;
  align-items: center;
  justify-content: flex-end;
  gap: 16px;
  height: 19px;
  padding-right: 27px;
  border-top: 1px solid #282828;
  border-bottom: 1px solid #282828;
  color: #bdbdbd;
}

.history-foot svg {
  width: 14px;
  height: 13px;
}

.history-edge {
  display: flex;
  align-items: center;
  justify-content: center;
  height: 7px;
}

.history-edge span {
  width: 19px;
  height: 3px;
  background: repeating-linear-gradient(90deg, #333 0 1px, #5a5a5a 1px 2px);
}

/* 输入法 */
.ime {
  position: absolute;
  top: 715px;
  right: 73px;
  display: flex;
  align-items: center;
  gap: 7px;
  height: 29px;
  padding-right: 5px;
  background: linear-gradient(90deg, transparent 20px, #fff 20px);
  color: #1e78c8;
}

.ime-logo {
  width: 36px;
  height: 36px;
  margin: 0 -1px 0 0;
}

.ime svg:not(.ime-logo) {
  width: 20px;
  height: 20px;
}

.ime .zh {
  width: 20px;
  font-size: 20px;
  font-weight: 700;
}

.ime .person {
  color: #b4bfd2;
}

.side-meter {
  position: absolute;
  top: 650px;
  right: 2px;
  width: 6px;
  height: 58px;
  padding-top: 14px;
  border-radius: 3px;
  background: #7a7a7a;
}

.side-meter span {
  display: block;
  height: 44px;
  border-radius: 3px;
  background: #f03a3a;
}

/* 任务栏 */
.taskbar {
  display: flex;
  flex: none;
  height: 50px;
  background: linear-gradient(90deg, #2d2c28, #2b2e29 12%, #2a332c 28%, #33322c 30%, #2b302b 38%, #292c2f 50%, #26302a 75%, #2b2e2d 80%, #1f2c29);
}

.task {
  position: relative;
  width: 62px;
}

.task svg {
  width: 30px;
  height: 30px;
}

.task.start {
  width: 60px;
}

.task.start svg,
.task.view svg {
  width: 20px;
  height: 20px;
}

.task.view {
  width: 62px;
}

.task.open::after {
  content: "";
  position: absolute;
  right: 5px;
  bottom: 0;
  left: 6px;
  height: 3px;
  background: #76b9ed;
}

.task.multi::after {
  background: linear-gradient(90deg, #76b9ed 40px, #5f92ba 40px);
}

.task.current {
  background: #555956;
}

.task.current::after {
  right: 0;
  left: 0;
}

.tray {
  display: flex;
  align-items: center;
  margin-left: auto;
  color: #fff;
}

.tray-s {
  width: 20px;
  height: 20px;
  margin: 0 28px 4px 0;
}

.tray-up {
  width: 18px;
  height: 10px;
  margin-right: 11px;
}

.tray-yellow {
  width: 20px;
  height: 20px;
  margin-right: 13px;
}

.tray-wifi {
  width: 16px;
  height: 16px;
  margin-right: 16px;
}

.tray-pen {
  width: 20px;
  height: 20px;
  margin-right: 23px;
}

.clock {
  display: flex;
  flex-direction: column;
  align-items: center;
  width: 66px;
  margin-right: 29px;
  font-size: 15px;
  line-height: 23px;
}

.tray-note {
  width: 20px;
  height: 20px;
  margin-right: 25px;
}

.show-desktop {
  width: 6px;
  height: 50px;
  border-left: 1px solid #777;
}

/* 水印 */
.watermark {
  position: absolute;
  right: 102px;
  bottom: 38px;
  color: rgba(222, 222, 222, 0.85);
  pointer-events: none;
}

.wm-top {
  display: flex;
  align-items: flex-end;
  justify-content: space-between;
  padding: 0 6px 2px 0;
}

.wm-top svg {
  width: 100px;
  height: 108px;
}

.wm-top text {
  fill: #303030;
  font-family: "Liberation Sans", sans-serif;
  font-size: 46px;
  font-weight: 700;
}

.wm-bai {
  font-family: "Liberation Sans", sans-serif;
  font-size: 76px;
  font-weight: 700;
  line-height: 68px;
}

.wm-exp {
  font-family: "Noto Sans CJK SC", sans-serif;
  font-size: 58px;
  font-weight: 900;
  line-height: 66px;
}

.wm-url {
  font-size: 40px;
  line-height: 54px;
  white-space: nowrap;
}
</style>
